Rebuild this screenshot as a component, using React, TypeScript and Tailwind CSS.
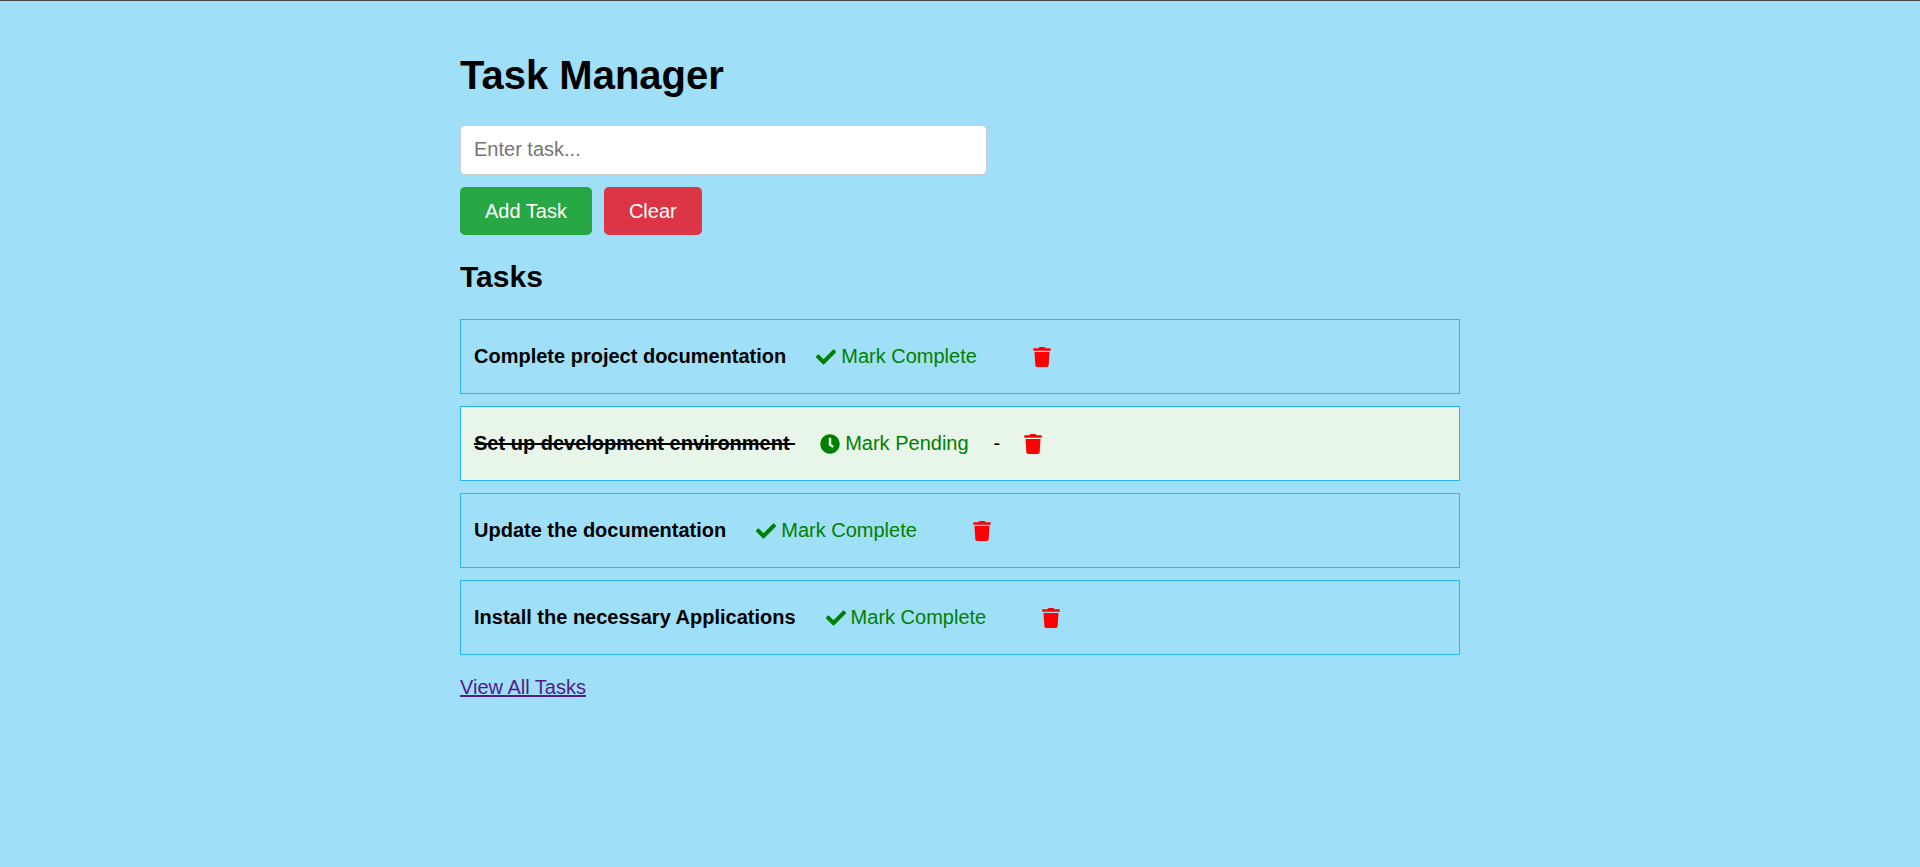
import { useState } from "react";
import { FaCheck, FaClock, FaTrash } from "react-icons/fa";

type Task = { id: number; title: string; done: boolean };

const initialTasks: Task[] = [
  { id: 1, title: "Complete project documentation", done: false },
  { id: 2, title: "Set up development environment", done: true },
  { id: 3, title: "Update the documentation", done: false },
  { id: 4, title: "Install the necessary Applications", done: false },
];

function TaskItem({ task, onToggle, onDelete }: { task: Task; onToggle: () => void; onDelete: () => void }) {
  return (
    <li
      className={
        task.done
          ? "flex items-center border border-[#29b6f6] bg-[#e8f5e9] px-[13px] py-6 leading-[25px]"
          : "flex items-center border border-[#29b6f6] px-[13px] py-6 leading-[25px]"
      }
    >
      <strong className={task.done ? "whitespace-pre line-through" : "whitespace-pre"}>
        {task.done ? task.title + " " : task.title}
      </strong>
      <button
        type="button"
        onClick={onToggle}
        className={
          task.done
            ? "ml-[25px] flex items-center gap-[5px] text-[#008000]"
            : "ml-[30px] flex items-center gap-[5px] text-[#008000]"
        }
      >
        {task.done ? <FaClock className="size-5" /> : <FaCheck className="size-5" />}
        {task.done ? "Mark Pending" : "Mark Complete"}
      </button>
      {task.done && <span className="ml-[25px]">-</span>}
      <button
        type="button"
        aria-label="Delete task"
        onClick={onDelete}
        className={task.done ? "ml-6 text-[#ff0000]" : "ml-14 text-[#ff0000]"}
      >
        <FaTrash className="h-5 w-[18px]" />
      </button>
    </li>
  );
}

export default function App() {
  const [text, setText] = useState("");
  const [tasks, setTasks] = useState<Task[]>(initialTasks);

  const addTask = () => {
    if (!text.trim()) return;
    setTasks([...tasks, { id: Date.now(), title: text.trim(), done: false }]);
    setText("");
  };

  return (
    <div className="min-h-screen border-t border-[#474747] bg-[#9fdff8] font-['Liberation_Sans',Arial,sans-serif] text-xl text-black">
      <main className="mx-auto max-w-[1000px] pt-[51px]">
        <h1 className="text-[40px] leading-[46px] font-bold">Task Manager</h1>
        <input
          type="text"
          aria-label="Task"
          placeholder="Enter task..."
          value={text}
          onChange={(e) => setText(e.target.value)}
          className="mt-[27px] block h-[50px] w-full max-w-[527px] rounded-[5px] border border-[#cccccc] bg-white px-[13px] pb-[2px] placeholder:text-[#757575]"
        />
        <div className="mt-3 flex gap-3">
          <button type="button" onClick={addTask} className="h-12 rounded-[5px] bg-[#28a745] px-[25px] text-white">
            Add Task
          </button>
          <button type="button" onClick={() => setTasks([])} className="h-12 rounded-[5px] bg-[#dc3545] px-[25px] text-white">
            Clear
          </button>
        </div>
        <h2 className="mt-[25px] text-[30px] leading-[34px] font-bold">Tasks</h2>
        <ul className="mt-[25px] flex flex-col gap-3">
          {tasks.map((task) => (
            <TaskItem
              key={task.id}
              task={task}
              onToggle={() => setTasks(tasks.map((t) => (t.id === task.id ? { ...t, done: !t.done } : t)))}
              onDelete={() => setTasks(tasks.filter((t) => t.id !== task.id))}
            />
          ))}
        </ul>
        <a href="#all" className="mt-5 inline-block leading-6 text-[#551a8b] underline">
          View All Tasks
        </a>
      </main>
    </div>
  );
}
